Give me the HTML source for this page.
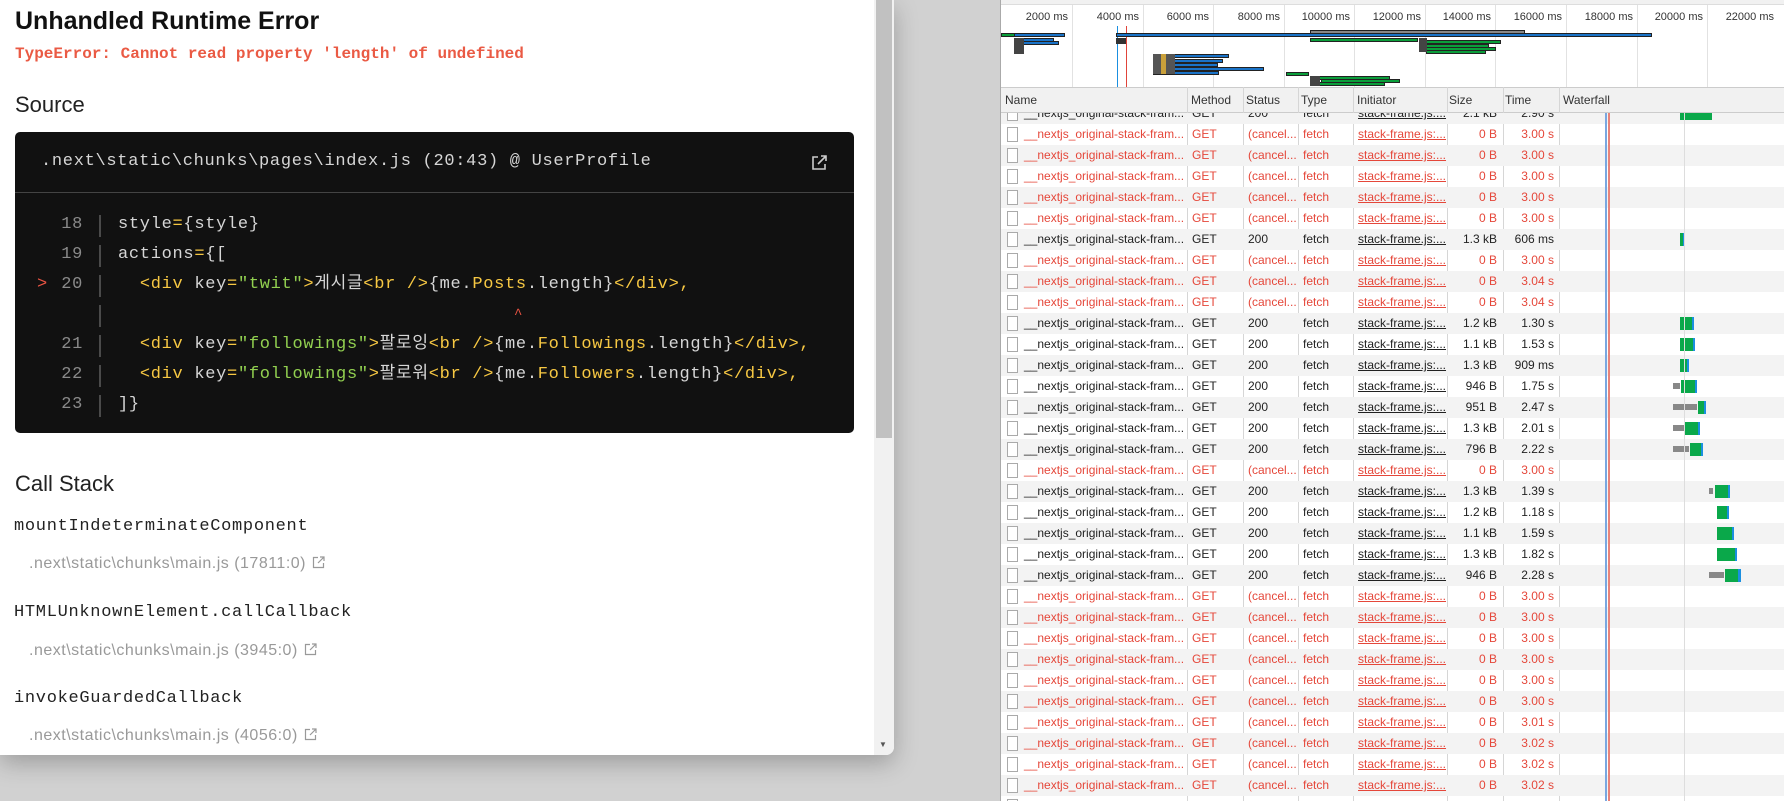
<!DOCTYPE html>
<html><head><meta charset="utf-8"><style>
*{margin:0;padding:0;box-sizing:border-box}
body{width:1784px;height:801px;overflow:hidden;background:#d1d1d1;position:relative;font-family:"Liberation Sans",sans-serif}
.ab{position:absolute;white-space:nowrap}
#panel{position:absolute;left:0;top:0;width:894px;height:755px;background:#fff;border-radius:0 0 8px 0;box-shadow:0 8px 24px rgba(0,0,0,.25);overflow:hidden}
.mono{font-family:"Liberation Mono","Noto Sans CJK KR",monospace}
#code{position:absolute;left:15px;top:132px;width:839px;height:301px;background:#111;border-radius:5px}
.cl{position:absolute;left:0;height:30px;line-height:30px;font-size:17px;letter-spacing:.7px;color:#d6d6d6;font-family:"Liberation Mono","Noto Sans CJK KR",monospace;white-space:pre}
.ln{position:absolute;left:38px;width:30px;text-align:right;color:#8a8a8a}
.bar{position:absolute;left:84px;top:5px;width:2px;height:22px;background:#4a4a4a}
.tx{position:absolute;left:103px}
.y{color:#f7c843}.g{color:#92d050}
.fl{position:absolute;left:29px;font-size:16px;letter-spacing:.5px;color:#999;line-height:1;white-space:nowrap}
.fl svg{vertical-align:-1px;margin-left:6px}
#dev{position:absolute;left:1000px;top:0;width:784px;height:801px;background:#fff;border-left:1px solid #aaa;font-size:12px;color:#222}
.gl{position:absolute;top:5px;width:1px;height:82px;background:#e2e2e2}
.lab{position:absolute;top:11px;font-size:11px;color:#333;text-align:right;width:60px}
.ob{position:absolute;height:4px;background:#1a73c8;border:1px solid #222}
.og{position:absolute;height:4px;background:#0a9e3a;border:1px solid #222}
.ogr{position:absolute;height:4px;background:#888;border:1px solid #222}
#hdr{position:absolute;left:0;top:87px;width:784px;height:26px;background:#f1f1f1;border-top:1px solid #ccc;border-bottom:1px solid #ccc}
.h{position:absolute;top:0;line-height:25px;font-size:12px;color:#333}
.cs{position:absolute;top:87px;width:1px;height:714px;background:#d6d6d6}
#rows{position:absolute;left:0;top:113px;width:784px;height:688px;overflow:hidden}
.r{position:absolute;left:0;width:784px;height:21px;line-height:21px;font-size:12px;color:#222}
.r.s{background:#f3f3f3}
.r.c{color:#e5473a}
.r i{position:absolute;left:6px;top:3px;width:11px;height:15px;border:1px solid #aaa;background:#fff}
.r span{position:absolute;white-space:nowrap}
.n{left:23px}.m{left:191px}.st{left:247px}.t{left:302px}.in{left:357px;text-decoration:underline}
.sz{left:400px;width:96px;text-align:right}.tm{left:460px;width:93px;text-align:right}
.wb{position:absolute;top:4px;height:13px}
</style></head><body>

<div id="panel">
  <div class="ab" style="left:15px;top:9px;font-size:25px;font-weight:bold;color:#111;line-height:1">Unhandled Runtime Error</div>
  <div class="ab mono" style="left:15px;top:46px;font-size:16px;letter-spacing:0;color:#ea5a44;line-height:1;font-weight:bold">TypeError: Cannot read property 'length' of undefined</div>
  <div class="ab" style="left:15px;top:94px;font-size:22px;color:#222;line-height:1">Source</div>
  <div id="code">
    <div class="ab mono" style="left:26px;top:20px;line-height:20px;font-size:17px;letter-spacing:.7px;color:#d6d6d6">.next\static\chunks\pages\index.js (20:43) @ UserProfile</div>
    <svg class="ab" style="left:795px;top:22px" width="18" height="18" viewBox="0 0 18 18" fill="none" stroke="#ccc" stroke-width="1.6"><path d="M8 3H3v12h12v-5M11 2h5v5M16 2 8 10"/></svg>
    <div class="ab" style="left:0;top:60px;width:839px;height:1px;background:#444"></div>
    <div class="cl" style="top:78px"><span class="ln">18</span><span class="bar"></span><span class="tx">style<span class="y">=</span>{style}</span></div>
    <div class="cl" style="top:108px"><span class="ln">19</span><span class="bar"></span><span class="tx">actions<span class="y">=</span>{[</span></div>
    <div class="cl" style="top:138px"><span class="ab" style="left:22px;color:#ea5443">&gt;</span><span class="ln">20</span><span class="bar"></span><span class="tx">  <span class="y">&lt;div</span> key<span class="y">=</span><span class="g">"twit"</span><span class="y">&gt;</span>게시글<span class="y">&lt;br /&gt;</span>{me.<span class="y">Posts</span>.length}<span class="y">&lt;/div&gt;,</span></span></div>
    <div class="cl" style="top:168px"><span class="bar"></span><span class="ab" style="left:499px;color:#ea5443;font-size:14px">^</span></div>
    <div class="cl" style="top:198px"><span class="ln">21</span><span class="bar"></span><span class="tx">  <span class="y">&lt;div</span> key<span class="y">=</span><span class="g">"followings"</span><span class="y">&gt;</span>팔로잉<span class="y">&lt;br /&gt;</span>{me.<span class="y">Followings</span>.length}<span class="y">&lt;/div&gt;,</span></span></div>
    <div class="cl" style="top:228px"><span class="ln">22</span><span class="bar"></span><span class="tx">  <span class="y">&lt;div</span> key<span class="y">=</span><span class="g">"followings"</span><span class="y">&gt;</span>팔로워<span class="y">&lt;br /&gt;</span>{me.<span class="y">Followers</span>.length}<span class="y">&lt;/div&gt;,</span></span></div>
    <div class="cl" style="top:258px"><span class="ln">23</span><span class="bar"></span><span class="tx">]}</span></div>
  </div>
  <div class="ab" style="left:15px;top:473px;font-size:22px;color:#222;line-height:1">Call Stack</div>
  <div class="ab mono" style="left:14px;top:518px;font-size:17px;letter-spacing:.7px;color:#222;line-height:1">mountIndeterminateComponent</div>
  <div class="fl" style="top:556px">.next\static\chunks\main.js (17811:0)<svg width="13" height="13" viewBox="0 0 13 13" fill="none" stroke="#999" stroke-width="1.2"><path d="M6 1.5H1.5v10h10V7M8 1h4v4M12 1 6 7"/></svg></div>
  <div class="ab mono" style="left:14px;top:604px;font-size:17px;letter-spacing:.7px;color:#222;line-height:1">HTMLUnknownElement.callCallback</div>
  <div class="fl" style="top:643px">.next\static\chunks\main.js (3945:0)<svg width="13" height="13" viewBox="0 0 13 13" fill="none" stroke="#999" stroke-width="1.2"><path d="M6 1.5H1.5v10h10V7M8 1h4v4M12 1 6 7"/></svg></div>
  <div class="ab mono" style="left:14px;top:690px;font-size:17px;letter-spacing:.7px;color:#222;line-height:1">invokeGuardedCallback</div>
  <div class="fl" style="top:728px">.next\static\chunks\main.js (4056:0)<svg width="13" height="13" viewBox="0 0 13 13" fill="none" stroke="#999" stroke-width="1.2"><path d="M6 1.5H1.5v10h10V7M8 1h4v4M12 1 6 7"/></svg></div>
  <div class="ab" style="left:874px;top:0;width:20px;height:755px;background:#f1f1f1"></div>
  <div class="ab" style="left:876px;top:0;width:16px;height:438px;background:#c1c1c1"></div>
  <div class="ab" style="left:879px;top:740px;font-size:8px;color:#555">&#9660;</div>
</div>

<div id="dev">
  <div class="ab" style="left:0;top:0;width:784px;height:5px;background:#f1f1f1;border-bottom:1px solid #ddd"></div>
  <div class="gl" style="left:71px"></div><div class="gl" style="left:142px"></div><div class="gl" style="left:212px"></div><div class="gl" style="left:283px"></div><div class="gl" style="left:353px"></div><div class="gl" style="left:424px"></div><div class="gl" style="left:494px"></div><div class="gl" style="left:565px"></div><div class="gl" style="left:636px"></div><div class="gl" style="left:706px"></div>
  <div class="lab" style="left:7px">2000 ms</div><div class="lab" style="left:78px">4000 ms</div><div class="lab" style="left:148px">6000 ms</div><div class="lab" style="left:219px">8000 ms</div><div class="lab" style="left:289px">10000 ms</div><div class="lab" style="left:360px">12000 ms</div><div class="lab" style="left:430px">14000 ms</div><div class="lab" style="left:501px">16000 ms</div><div class="lab" style="left:572px">18000 ms</div><div class="lab" style="left:642px">20000 ms</div><div class="lab" style="left:713px">22000 ms</div>
  <div class="ab" style="left:116px;top:26px;width:1px;height:61px;background:#1a8fe0"></div>
  <div class="ab" style="left:125px;top:26px;width:1px;height:61px;background:#e0443a"></div>
  <div class="og" style="left:0;top:33px;width:14px"></div><div class="ob" style="left:13px;top:33px;width:51px"></div>
  <div class="ob" style="left:15px;top:38px;width:38px"></div><div class="ob" style="left:20px;top:41px;width:38px"></div>
  <div class="ab" style="left:13px;top:38px;width:10px;height:16px;background:#444"></div>
  <div class="ob" style="left:115px;top:33px;width:536px"></div>
  <div class="ab" style="left:115px;top:38px;width:10px;height:6px;background:#333"></div>
  <div class="ogr" style="left:309px;top:30px;width:215px"></div>
  <div class="og" style="left:309px;top:38px;width:108px"></div>
  <div class="og" style="left:425px;top:40px;width:75px"></div><div class="og" style="left:425px;top:44px;width:63px"></div><div class="og" style="left:425px;top:47px;width:70px"></div><div class="og" style="left:425px;top:50px;width:60px"></div>
  <div class="ab" style="left:418px;top:38px;width:8px;height:14px;background:#444"></div>
  <div class="ob" style="left:152px;top:54px;width:76px"></div><div class="ob" style="left:152px;top:59px;width:70px"></div><div class="ob" style="left:152px;top:63px;width:65px"></div><div class="ob" style="left:152px;top:67px;width:111px"></div><div class="ob" style="left:152px;top:71px;width:66px"></div>
  <div class="ab" style="left:152px;top:54px;width:22px;height:20px;background:#555"></div><div class="ab" style="left:160px;top:54px;width:5px;height:20px;background:#c9a03a"></div>
  <div class="og" style="left:285px;top:72px;width:23px"></div>
  <div class="og" style="left:309px;top:76px;width:80px"></div><div class="og" style="left:320px;top:79px;width:79px"></div><div class="og" style="left:309px;top:82px;width:75px"></div>
  <div class="ab" style="left:309px;top:76px;width:10px;height:10px;background:#444"></div>

  <div id="hdr">
    <span class="h" style="left:4px">Name</span><span class="h" style="left:190px">Method</span><span class="h" style="left:245px">Status</span><span class="h" style="left:300px">Type</span><span class="h" style="left:356px">Initiator</span><span class="h" style="left:448px">Size</span><span class="h" style="left:504px">Time</span><span class="h" style="left:562px">Waterfall</span>
  </div>
  <div class="cs" style="left:186px"></div><div class="cs" style="left:242px"></div><div class="cs" style="left:297px"></div><div class="cs" style="left:352px"></div><div class="cs" style="left:446px"></div><div class="cs" style="left:502px"></div><div class="cs" style="left:558px"></div>

  <div id="rows">
    <div style="position:absolute;left:0;top:-10px;width:784px;height:720px">
<div class="r s" style="top:0"><i></i><span class="n">__nextjs_original-stack-fram...</span><span class="m">GET</span><span class="st">200</span><span class="t">fetch</span><span class="in">stack-frame.js:...</span><span class="sz">2.1 kB</span><span class="tm">2.90 s</span><div class="wb" style="left:679px;width:32px;background:#0aa84a"></div></div>
<div class="r c" style="top:21px"><i></i><span class="n">__nextjs_original-stack-fram...</span><span class="m">GET</span><span class="st">(cancel...</span><span class="t">fetch</span><span class="in">stack-frame.js:...</span><span class="sz">0 B</span><span class="tm">3.00 s</span></div>
<div class="r c s" style="top:42px"><i></i><span class="n">__nextjs_original-stack-fram...</span><span class="m">GET</span><span class="st">(cancel...</span><span class="t">fetch</span><span class="in">stack-frame.js:...</span><span class="sz">0 B</span><span class="tm">3.00 s</span></div>
<div class="r c" style="top:63px"><i></i><span class="n">__nextjs_original-stack-fram...</span><span class="m">GET</span><span class="st">(cancel...</span><span class="t">fetch</span><span class="in">stack-frame.js:...</span><span class="sz">0 B</span><span class="tm">3.00 s</span></div>
<div class="r c s" style="top:84px"><i></i><span class="n">__nextjs_original-stack-fram...</span><span class="m">GET</span><span class="st">(cancel...</span><span class="t">fetch</span><span class="in">stack-frame.js:...</span><span class="sz">0 B</span><span class="tm">3.00 s</span></div>
<div class="r c" style="top:105px"><i></i><span class="n">__nextjs_original-stack-fram...</span><span class="m">GET</span><span class="st">(cancel...</span><span class="t">fetch</span><span class="in">stack-frame.js:...</span><span class="sz">0 B</span><span class="tm">3.00 s</span></div>
<div class="r s" style="top:126px"><i></i><span class="n">__nextjs_original-stack-fram...</span><span class="m">GET</span><span class="st">200</span><span class="t">fetch</span><span class="in">stack-frame.js:...</span><span class="sz">1.3 kB</span><span class="tm">606 ms</span><div class="wb" style="left:679px;width:3px;background:#0aa84a"></div><div class="wb" style="left:682px;width:2px;background:#1a8fe0"></div></div>
<div class="r c" style="top:147px"><i></i><span class="n">__nextjs_original-stack-fram...</span><span class="m">GET</span><span class="st">(cancel...</span><span class="t">fetch</span><span class="in">stack-frame.js:...</span><span class="sz">0 B</span><span class="tm">3.00 s</span></div>
<div class="r c s" style="top:168px"><i></i><span class="n">__nextjs_original-stack-fram...</span><span class="m">GET</span><span class="st">(cancel...</span><span class="t">fetch</span><span class="in">stack-frame.js:...</span><span class="sz">0 B</span><span class="tm">3.04 s</span></div>
<div class="r c" style="top:189px"><i></i><span class="n">__nextjs_original-stack-fram...</span><span class="m">GET</span><span class="st">(cancel...</span><span class="t">fetch</span><span class="in">stack-frame.js:...</span><span class="sz">0 B</span><span class="tm">3.04 s</span></div>
<div class="r s" style="top:210px"><i></i><span class="n">__nextjs_original-stack-fram...</span><span class="m">GET</span><span class="st">200</span><span class="t">fetch</span><span class="in">stack-frame.js:...</span><span class="sz">1.2 kB</span><span class="tm">1.30 s</span><div class="wb" style="left:679px;width:12px;background:#0aa84a"></div><div class="wb" style="left:691px;width:2px;background:#1a8fe0"></div></div>
<div class="r" style="top:231px"><i></i><span class="n">__nextjs_original-stack-fram...</span><span class="m">GET</span><span class="st">200</span><span class="t">fetch</span><span class="in">stack-frame.js:...</span><span class="sz">1.1 kB</span><span class="tm">1.53 s</span><div class="wb" style="left:679px;width:13px;background:#0aa84a"></div><div class="wb" style="left:692px;width:2px;background:#1a8fe0"></div></div>
<div class="r s" style="top:252px"><i></i><span class="n">__nextjs_original-stack-fram...</span><span class="m">GET</span><span class="st">200</span><span class="t">fetch</span><span class="in">stack-frame.js:...</span><span class="sz">1.3 kB</span><span class="tm">909 ms</span><div class="wb" style="left:679px;width:7px;background:#0aa84a"></div><div class="wb" style="left:686px;width:2px;background:#1a8fe0"></div></div>
<div class="r" style="top:273px"><i></i><span class="n">__nextjs_original-stack-fram...</span><span class="m">GET</span><span class="st">200</span><span class="t">fetch</span><span class="in">stack-frame.js:...</span><span class="sz">946 B</span><span class="tm">1.75 s</span><div class="wb" style="left:672px;top:7px;height:6px;width:7px;background:#888"></div><div class="wb" style="left:680px;width:14px;background:#0aa84a"></div><div class="wb" style="left:694px;width:2px;background:#1a8fe0"></div></div>
<div class="r s" style="top:294px"><i></i><span class="n">__nextjs_original-stack-fram...</span><span class="m">GET</span><span class="st">200</span><span class="t">fetch</span><span class="in">stack-frame.js:...</span><span class="sz">951 B</span><span class="tm">2.47 s</span><div class="wb" style="left:672px;top:7px;height:6px;width:24px;background:#888"></div><div class="wb" style="left:697px;width:6px;background:#0aa84a"></div><div class="wb" style="left:703px;width:2px;background:#1a8fe0"></div></div>
<div class="r" style="top:315px"><i></i><span class="n">__nextjs_original-stack-fram...</span><span class="m">GET</span><span class="st">200</span><span class="t">fetch</span><span class="in">stack-frame.js:...</span><span class="sz">1.3 kB</span><span class="tm">2.01 s</span><div class="wb" style="left:672px;top:7px;height:6px;width:11px;background:#888"></div><div class="wb" style="left:684px;width:13px;background:#0aa84a"></div><div class="wb" style="left:697px;width:2px;background:#1a8fe0"></div></div>
<div class="r s" style="top:336px"><i></i><span class="n">__nextjs_original-stack-fram...</span><span class="m">GET</span><span class="st">200</span><span class="t">fetch</span><span class="in">stack-frame.js:...</span><span class="sz">796 B</span><span class="tm">2.22 s</span><div class="wb" style="left:672px;top:7px;height:6px;width:16px;background:#888"></div><div class="wb" style="left:689px;width:11px;background:#0aa84a"></div><div class="wb" style="left:700px;width:2px;background:#1a8fe0"></div></div>
<div class="r c" style="top:357px"><i></i><span class="n">__nextjs_original-stack-fram...</span><span class="m">GET</span><span class="st">(cancel...</span><span class="t">fetch</span><span class="in">stack-frame.js:...</span><span class="sz">0 B</span><span class="tm">3.00 s</span></div>
<div class="r s" style="top:378px"><i></i><span class="n">__nextjs_original-stack-fram...</span><span class="m">GET</span><span class="st">200</span><span class="t">fetch</span><span class="in">stack-frame.js:...</span><span class="sz">1.3 kB</span><span class="tm">1.39 s</span><div class="wb" style="left:708px;top:7px;height:6px;width:4px;background:#888"></div><div class="wb" style="left:714px;width:13px;background:#0aa84a"></div><div class="wb" style="left:727px;width:2px;background:#1a8fe0"></div></div>
<div class="r" style="top:399px"><i></i><span class="n">__nextjs_original-stack-fram...</span><span class="m">GET</span><span class="st">200</span><span class="t">fetch</span><span class="in">stack-frame.js:...</span><span class="sz">1.2 kB</span><span class="tm">1.18 s</span><div class="wb" style="left:716px;width:10px;background:#0aa84a"></div><div class="wb" style="left:726px;width:2px;background:#1a8fe0"></div></div>
<div class="r s" style="top:420px"><i></i><span class="n">__nextjs_original-stack-fram...</span><span class="m">GET</span><span class="st">200</span><span class="t">fetch</span><span class="in">stack-frame.js:...</span><span class="sz">1.1 kB</span><span class="tm">1.59 s</span><div class="wb" style="left:716px;width:15px;background:#0aa84a"></div><div class="wb" style="left:731px;width:2px;background:#1a8fe0"></div></div>
<div class="r" style="top:441px"><i></i><span class="n">__nextjs_original-stack-fram...</span><span class="m">GET</span><span class="st">200</span><span class="t">fetch</span><span class="in">stack-frame.js:...</span><span class="sz">1.3 kB</span><span class="tm">1.82 s</span><div class="wb" style="left:716px;width:18px;background:#0aa84a"></div><div class="wb" style="left:734px;width:2px;background:#1a8fe0"></div></div>
<div class="r s" style="top:462px"><i></i><span class="n">__nextjs_original-stack-fram...</span><span class="m">GET</span><span class="st">200</span><span class="t">fetch</span><span class="in">stack-frame.js:...</span><span class="sz">946 B</span><span class="tm">2.28 s</span><div class="wb" style="left:708px;top:7px;height:6px;width:15px;background:#888"></div><div class="wb" style="left:724px;width:13px;background:#0aa84a"></div><div class="wb" style="left:737px;width:3px;background:#1a8fe0"></div></div>
<div class="r c" style="top:483px"><i></i><span class="n">__nextjs_original-stack-fram...</span><span class="m">GET</span><span class="st">(cancel...</span><span class="t">fetch</span><span class="in">stack-frame.js:...</span><span class="sz">0 B</span><span class="tm">3.00 s</span></div>
<div class="r c s" style="top:504px"><i></i><span class="n">__nextjs_original-stack-fram...</span><span class="m">GET</span><span class="st">(cancel...</span><span class="t">fetch</span><span class="in">stack-frame.js:...</span><span class="sz">0 B</span><span class="tm">3.00 s</span></div>
<div class="r c" style="top:525px"><i></i><span class="n">__nextjs_original-stack-fram...</span><span class="m">GET</span><span class="st">(cancel...</span><span class="t">fetch</span><span class="in">stack-frame.js:...</span><span class="sz">0 B</span><span class="tm">3.00 s</span></div>
<div class="r c s" style="top:546px"><i></i><span class="n">__nextjs_original-stack-fram...</span><span class="m">GET</span><span class="st">(cancel...</span><span class="t">fetch</span><span class="in">stack-frame.js:...</span><span class="sz">0 B</span><span class="tm">3.00 s</span></div>
<div class="r c" style="top:567px"><i></i><span class="n">__nextjs_original-stack-fram...</span><span class="m">GET</span><span class="st">(cancel...</span><span class="t">fetch</span><span class="in">stack-frame.js:...</span><span class="sz">0 B</span><span class="tm">3.00 s</span></div>
<div class="r c s" style="top:588px"><i></i><span class="n">__nextjs_original-stack-fram...</span><span class="m">GET</span><span class="st">(cancel...</span><span class="t">fetch</span><span class="in">stack-frame.js:...</span><span class="sz">0 B</span><span class="tm">3.00 s</span></div>
<div class="r c" style="top:609px"><i></i><span class="n">__nextjs_original-stack-fram...</span><span class="m">GET</span><span class="st">(cancel...</span><span class="t">fetch</span><span class="in">stack-frame.js:...</span><span class="sz">0 B</span><span class="tm">3.01 s</span></div>
<div class="r c s" style="top:630px"><i></i><span class="n">__nextjs_original-stack-fram...</span><span class="m">GET</span><span class="st">(cancel...</span><span class="t">fetch</span><span class="in">stack-frame.js:...</span><span class="sz">0 B</span><span class="tm">3.02 s</span></div>
<div class="r c" style="top:651px"><i></i><span class="n">__nextjs_original-stack-fram...</span><span class="m">GET</span><span class="st">(cancel...</span><span class="t">fetch</span><span class="in">stack-frame.js:...</span><span class="sz">0 B</span><span class="tm">3.02 s</span></div>
<div class="r c s" style="top:672px"><i></i><span class="n">__nextjs_original-stack-fram...</span><span class="m">GET</span><span class="st">(cancel...</span><span class="t">fetch</span><span class="in">stack-frame.js:...</span><span class="sz">0 B</span><span class="tm">3.02 s</span></div>
<div class="r c" style="top:693px"><i></i><span class="n">__nextjs_original-stack-fram...</span><span class="m">GET</span><span class="st">(cancel...</span><span class="t">fetch</span><span class="in">stack-frame.js:...</span><span class="sz">0 B</span><span class="tm">3.02 s</span></div>
    </div>
    <div class="ab" style="left:683px;top:0;width:1px;height:688px;background:#ddd"></div>
    <div class="ab" style="left:604px;top:0;width:2px;height:688px;background:#7aa7e0"></div>
    <div class="ab" style="left:607px;top:0;width:2px;height:688px;background:#e8837a"></div>
  </div>
</div>
</body></html>
